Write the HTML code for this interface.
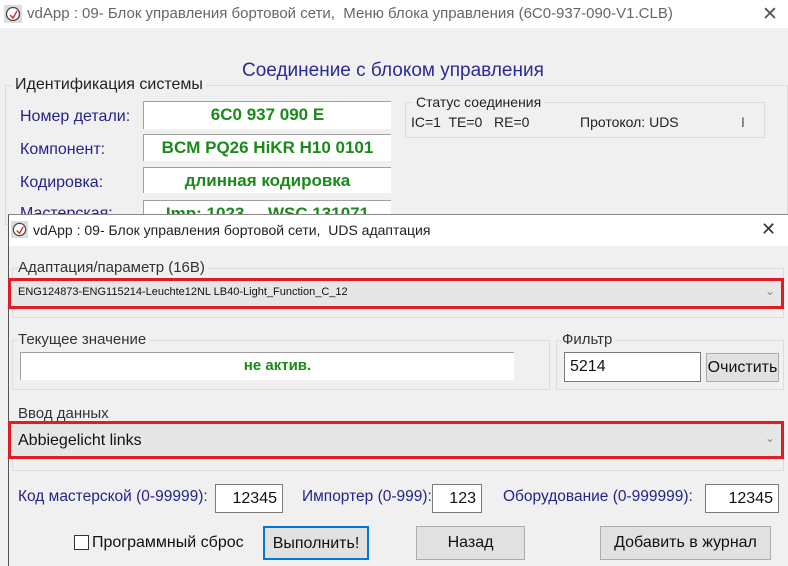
<!DOCTYPE html>
<html><head><meta charset="utf-8"><style>
*{margin:0;padding:0;box-sizing:border-box}
body{width:788px;height:566px;overflow:hidden;background:#f0f0f0;font-family:"Liberation Sans",sans-serif;position:relative}
.a{position:absolute;white-space:nowrap}
.blue{color:#23238a}
.fld{position:absolute;background:#fff;border-top:1px solid #a0a0a0;border-left:1px solid #a0a0a0;color:#1a8a1a;font-weight:bold;text-align:center}
.grp{position:absolute;border:1px solid #dcdcdc}
.btn{position:absolute;background:#e1e1e1;border:1px solid #adadad;text-align:center;font-size:16px;color:#111}
.inp{position:absolute;background:#fff;border:1px solid #7a7a7a;font-size:16px;text-align:right;padding-right:5px;color:#111}
</style></head><body>
<div class="a" style="left:0;top:0;width:788px;height:28px;background:#fff"></div>
<svg class="a" style="left:4px;top:5px" width="18" height="18" viewBox="0 0 18 18"><rect x="0" y="0" width="18" height="18" fill="#ddd"/><circle cx="9" cy="9" r="6.5" fill="#fff" stroke="#444" stroke-width="1.3"/><path d="M6 10l3 3 4-7" stroke="#c33" stroke-width="1.5" fill="none"/></svg>
<div class="a" style="left:27px;top:5px;font-size:15px;color:#666">vdApp : 09- Блок управления бортовой сети,&nbsp; Меню блока управления (6C0-937-090-V1.CLB)</div>
<div class="a" style="left:762px;top:3px;font-size:19px;color:#555">✕</div>
<div class="a" style="left:242px;top:60px;font-size:19px;color:#2b2b95">Соединение с блоком управления</div>
<div class="grp" style="left:5px;top:85px;width:783px;height:140px"></div>
<div class="a" style="left:12px;top:76px;font-size:16px;color:#222;background:#f0f0f0;padding:0 3px">Идентификация системы</div>
<div class="a blue" style="left:20px;top:108px;font-size:16px">Номер детали:</div>
<div class="a blue" style="left:20px;top:141px;font-size:16px">Компонент:</div>
<div class="a blue" style="left:20px;top:174px;font-size:16px">Кодировка:</div>
<div class="a blue" style="left:20px;top:205px;font-size:16px">Мастерская:</div>
<div class="fld" style="left:143px;top:101px;width:248px;height:28px;font-size:17px;line-height:26px">6C0 937 090 E</div>
<div class="fld" style="left:143px;top:134px;width:248px;height:27px;font-size:17px;line-height:26px">BCM PQ26 HiKR H10 0101</div>
<div class="fld" style="left:143px;top:167px;width:248px;height:26px;font-size:17px;line-height:25px">длинная кодировка</div>
<div class="fld" style="left:143px;top:200px;width:248px;height:26px;font-size:17px;line-height:25px">Imp: 1023 &nbsp;&nbsp;&nbsp; WSC 131071</div>
<div class="grp" style="left:405px;top:102px;width:360px;height:36px"></div>
<div class="a" style="left:413px;top:94px;font-size:14px;color:#222;background:#f0f0f0;padding:0 3px">Статус соединения</div>
<div class="a" style="left:411px;top:114px;font-size:14px;color:#222">IC=1&nbsp; TE=0&nbsp;&nbsp; RE=0</div>
<div class="a" style="left:580px;top:114px;font-size:14px;color:#222">Протокол: UDS</div>
<div class="a" style="left:741px;top:114px;font-size:14px;color:#555">I</div>
<div class="a" style="left:8px;top:214px;width:780px;height:352px;background:#f0f0f0;border-left:1px solid #555;border-top:1px solid #888"></div>
<div class="a" style="left:9px;top:215px;width:779px;height:31px;background:#fff"></div>
<svg class="a" style="left:11px;top:221px" width="17" height="17" viewBox="0 0 18 18"><rect width="18" height="18" fill="#ddd"/><circle cx="9" cy="9" r="6.5" fill="#fff" stroke="#444" stroke-width="1.3"/><path d="M6 10l3 3 4-7" stroke="#c33" stroke-width="1.5" fill="none"/></svg>
<div class="a" style="left:33px;top:222px;font-size:14px;color:#222">vdApp : 09- Блок управления бортовой сети,&nbsp; UDS адаптация</div>
<div class="a" style="left:761px;top:219px;font-size:18px;color:#333">✕</div>
<div class="grp" style="left:12px;top:268px;width:772px;height:50px"></div>
<div class="a" style="left:18px;top:259px;font-size:15px;color:#333;background:#f0f0f0;padding-right:3px">Адаптация/параметр (16В)</div>
<div class="a" style="left:8px;top:278px;width:776px;height:31px;border:3px solid #e21c24;background:#e6e6e6"></div>
<div class="a" style="left:18px;top:286px;font-size:11px;color:#111">ENG124873-ENG115214-Leuchte12NL LB40-Light_Function_C_12</div>
<div class="a" style="left:765px;top:284px;font-size:12px;color:#888">⌄</div>
<div class="grp" style="left:12px;top:340px;width:538px;height:50px"></div>
<div class="a" style="left:18px;top:331px;font-size:15px;color:#333;background:#f0f0f0;padding-right:3px">Текущее значение</div>
<div class="fld" style="left:20px;top:352px;width:494px;height:28px;font-size:15px;line-height:26px;padding-left:20px">не актив.</div>
<div class="grp" style="left:556px;top:340px;width:228px;height:50px"></div>
<div class="a" style="left:562px;top:331px;font-size:15px;color:#333;background:#f0f0f0;padding-right:3px">Фильтр</div>
<div class="inp" style="left:564px;top:352px;width:137px;height:30px;text-align:left;padding-left:5px;line-height:28px">5214</div>
<div class="btn" style="left:706px;top:353px;width:73px;height:29px;line-height:28px">Очистить</div>
<div class="grp" style="left:12px;top:421px;width:772px;height:50px"></div>
<div class="a" style="left:18px;top:405px;font-size:15px;color:#333;background:#f0f0f0;padding-right:3px">Ввод данных</div>
<div class="a" style="left:8px;top:421px;width:776px;height:38px;border:3px solid #e21c24;background:#e6e6e6"></div>
<div class="a" style="left:18px;top:432px;font-size:16px;color:#111">Abbiegelicht links</div>
<div class="a" style="left:765px;top:431px;font-size:12px;color:#888">⌄</div>
<div class="a blue" style="left:18px;top:488px;font-size:15.5px">Код мастерской (0-99999):</div>
<div class="inp" style="left:215px;top:484px;width:68px;height:29px;line-height:27px">12345</div>
<div class="a blue" style="left:302px;top:488px;font-size:15.5px">Импортер (0-999):</div>
<div class="inp" style="left:432px;top:484px;width:50px;height:29px;line-height:27px">123</div>
<div class="a blue" style="left:503px;top:488px;font-size:15.5px">Оборудование (0-999999):</div>
<div class="inp" style="left:705px;top:484px;width:74px;height:29px;line-height:27px">12345</div>
<div class="a" style="left:74px;top:535px;width:15px;height:15px;border:1px solid #333;background:#fff"></div>
<div class="a" style="left:92px;top:534px;font-size:16px;color:#111">Программный сброс</div>
<div class="btn" style="left:263px;top:526px;width:106px;height:34px;line-height:32px;border:2px solid #0078d7">Выполнить!</div>
<div class="btn" style="left:416px;top:526px;width:109px;height:34px;line-height:32px">Назад</div>
<div class="btn" style="left:600px;top:526px;width:171px;height:34px;line-height:32px">Добавить в журнал</div>
</body></html>
